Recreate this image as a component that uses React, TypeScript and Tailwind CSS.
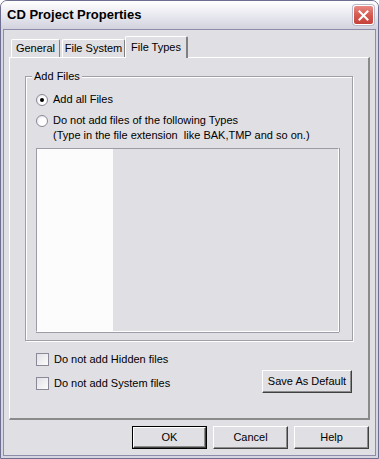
const Radio = ({ checked }: { checked?: boolean }) => (
  <span className="flex h-[12px] w-[12px] shrink-0 items-center justify-center rounded-full border border-[#8a8a98] bg-[radial-gradient(circle_at_60%_60%,#ffffff_40%,#dcdce2)]">
    {checked && <span className="h-[4px] w-[4px] rounded-full bg-black" />}
  </span>
);

const Check = () => (
  <span className="h-[13px] w-[13px] shrink-0 border border-[#8a8a98] bg-gradient-to-br from-[#e2e2e6] to-[#fcfcfc]" />
);

const Button = ({
  label,
  width,
  primary,
}: {
  label: string;
  width: string;
  primary?: boolean;
}) => (
  <div className={`${width} h-[23px] ${primary ? "border border-black" : ""}`}>
    <div className="flex h-full w-full items-center justify-center border border-t-white border-l-white border-r-[#404040] border-b-[#404040] bg-[#e0dfe3] shadow-[inset_-1px_-1px_0_#8c8c8c] text-[11px] leading-[13px]">
      {label}
    </div>
  </div>
);

const App = () => {
  return (
    <div className="flex h-[459px] w-[379px] flex-col overflow-hidden rounded-t-[7px] border border-[#6e6e90] bg-[#d6d6e2] font-['Liberation_Sans',Arial,sans-serif] text-black">
      <div className="flex h-[28px] shrink-0 items-center justify-between bg-gradient-to-b from-[#ffffff] via-[#e9e9f0] to-[#d2d2de] pl-[6px] pr-[4px]">
        <span className="text-[13px] font-bold leading-[16px]">
          CD Project Properties
        </span>
        <div className="flex h-[20px] w-[21px] items-center justify-center rounded-[3px] border border-white bg-gradient-to-b from-[#e88a84] via-[#d55a52] to-[#c4423a] shadow-[0_0_0_1px_#b8b8c8]">
          <svg width="11" height="11" viewBox="0 0 11 11">
            <path
              d="M1.5 1.5 L9.5 9.5 M9.5 1.5 L1.5 9.5"
              stroke="white"
              strokeWidth="2"
              strokeLinecap="square"
            />
          </svg>
        </div>
      </div>

      <div className="mx-[2px] mb-[2px] flex flex-1 flex-col border border-[#8d8dab] bg-[#e0dfe3] px-[5px] pt-[6px]">
        {/* tabs */}
        <div className="flex h-[21px] items-end pl-[2px] text-[11px]">
          <div className="flex h-[18px] w-[49px] items-center justify-center rounded-t-[2px] border-l border-t border-r border-l-white border-t-white border-r-[#808080]">
            General
          </div>
          <div className="ml-[2px] flex h-[18px] w-[63px] items-center justify-center rounded-t-[2px] border-l border-t border-r border-l-white border-t-white border-r-[#808080]">
            File System
          </div>
          <div className="relative z-10 -mb-[1px] flex h-[22px] w-[63px] items-start justify-center rounded-t-[2px] border-l border-t border-r-2 border-l-white border-t-white border-r-[#808080] bg-[#e0dfe3] pt-[2px]">
            File Types
          </div>
        </div>

        {/* tab panel */}
        <div className="flex h-[363px] flex-col border-b-2 border-l border-r-2 border-t border-b-[#8a8a8a] border-l-white border-r-[#8a8a8a] border-t-white">
          <fieldset className="ml-[15px] mr-[15px] mt-[12px] h-[271px] border border-[#a0a0a8] shadow-[1px_1px_0_#ffffff,inset_1px_1px_0_#ffffff]">
            <legend className="ml-[6px] bg-[#e0dfe3] px-[2px] text-[11px] leading-[13px]">
              Add Files
            </legend>
            <div className="flex flex-col pl-[10px] text-[11px] leading-[13px]">
              <div className="mt-[10px] flex items-center gap-[5px]">
                <Radio checked />
                <span>Add all Files</span>
              </div>
              <div className="mt-[8px] flex items-center gap-[5px]">
                <Radio />
                <span>Do not add files of the following Types</span>
              </div>
              <div className="ml-[17px] mt-[2px] whitespace-pre">
                (Type in the file extension  like BAK,TMP and so on.)
              </div>
              <div className="mt-[6px] flex h-[184px] w-[303px] border border-b-white border-l-[#9c9ca8] border-r-white border-t-[#9c9ca8] shadow-[inset_1px_1px_0_#a8a8b4,0_1px_0_#9c9ca8,1px_0_0_#9c9ca8]">
                <div className="h-full w-[76px] bg-[#fcfcfc]" />
                <div className="h-full flex-1 bg-[#e0dfe3]" />
              </div>
            </div>
          </fieldset>

          <div className="mt-[12px] flex items-start justify-between pl-[26px] pr-[16px] text-[11px] leading-[13px]">
            <div className="flex flex-col gap-[11px]">
              <div className="flex items-center gap-[5px]">
                <Check />
                <span>Do not add Hidden files</span>
              </div>
              <div className="flex items-center gap-[5px]">
                <Check />
                <span>Do not add System files</span>
              </div>
            </div>
            <div className="mt-[17px]">
              <Button label="Save As Default" width="w-[90px]" />
            </div>
          </div>
        </div>

        {/* dialog buttons */}
        <div className="mt-[6px] flex justify-end gap-[6px] pr-[1px]">
          <Button label="OK" width="w-[75px]" primary />
          <Button label="Cancel" width="w-[75px]" />
          <Button label="Help" width="w-[75px]" />
        </div>
      </div>
    </div>
  );
};

export default App;
